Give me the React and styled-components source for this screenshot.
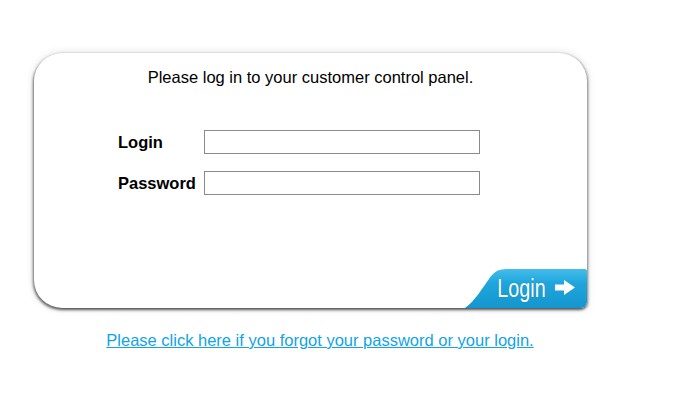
import styled, { createGlobalStyle } from 'styled-components';

const GlobalStyle = createGlobalStyle`
  body {
    margin: 0;
    background: #ffffff;
    font-family: "Liberation Sans", Arial, sans-serif;
    color: #000;
  }
`;

const Page = styled.div`
  width: 640px;
  padding-top: 53px;
`;

const Card = styled.div`
  margin-left: 34px;
  width: 553px;
  height: 255px;
  display: flex;
  flex-direction: column;
  background: #fff;
  border-radius: 28px 28px 6px 28px;
  box-shadow:
    -1px 2px 3px rgba(0, 0, 0, 0.5),
    1px 1px 3px rgba(0, 0, 0, 0.4),
    0 0 10px rgba(0, 0, 0, 0.12);
  overflow: hidden;
`;

const Intro = styled.p`
  margin: 15px 0 0;
  text-align: center;
  font-size: 16.5px;
  line-height: 18px;
`;

const Form = styled.div`
  margin: 44px 0 0 84px;
  display: grid;
  grid-template-columns: 86px 276px;
  row-gap: 17px;
  align-items: center;
`;

const Label = styled.label`
  font-size: 16.5px;
  font-weight: bold;
  white-space: nowrap;
`;

const Field = styled.input`
  box-sizing: border-box;
  width: 276px;
  height: 24px;
  margin: 0;
  border: 1px solid #8a8a8a;
  background: #fff;
  padding: 0 4px;
  font-size: 14px;
  font-family: inherit;
`;

const Footer = styled.div`
  margin-top: auto;
  display: flex;
  justify-content: flex-end;
`;

const LoginButton = styled.button`
  width: 122px;
  height: 39px;
  border: 0;
  padding: 0 12px 2px 0;
  display: flex;
  align-items: center;
  justify-content: flex-end;
  gap: 9px;
  cursor: pointer;
  background: linear-gradient(#45bdea 0%, #1fa6dc 35%, #1496cf 100%);
  clip-path: path('M0 39 C 10 32, 18 18, 24 10 C 28 4, 32 0, 42 0 L 120 0 Q 122 0 122 2 L 122 34 Q 122 39 117 39 Z');
  color: #fff;
`;

const ButtonText = styled.span`
  font-family: "Liberation Sans", sans-serif;
  font-size: 26px;
  line-height: 1;
  display: inline-block;
  transform: scaleX(0.76);
  transform-origin: right center;
  margin-left: -16px;
  text-shadow: 0 0 1px rgba(0, 60, 100, 0.4);
`;

const Arrow = () => (
  <svg width="20" height="15" viewBox="0 0 20 15" aria-hidden="true">
    <path d="M0 4.5 H9 V0 L20 7.5 L9 15 V10.5 H0 Z" fill="#fff" />
  </svg>
);

const Forgot = styled.a`
  display: block;
  margin-top: 23px;
  text-align: center;
  font-size: 16.5px;
  color: #12a3e8;
  text-decoration: underline;
`;

export default function App() {
  return (
    <>
      <GlobalStyle />
      <Page>
        <Card>
          <Intro>Please log in to your customer control panel.</Intro>
          <Form>
            <Label htmlFor="login">Login</Label>
            <Field id="login" type="text" />
            <Label htmlFor="password">Password</Label>
            <Field id="password" type="password" />
          </Form>
          <Footer>
            <LoginButton type="button">
              <ButtonText>Login</ButtonText>
              <Arrow />
            </LoginButton>
          </Footer>
        </Card>
        <Forgot href="#">Please click here if you forgot your password or your login.</Forgot>
      </Page>
    </>
  );
}
